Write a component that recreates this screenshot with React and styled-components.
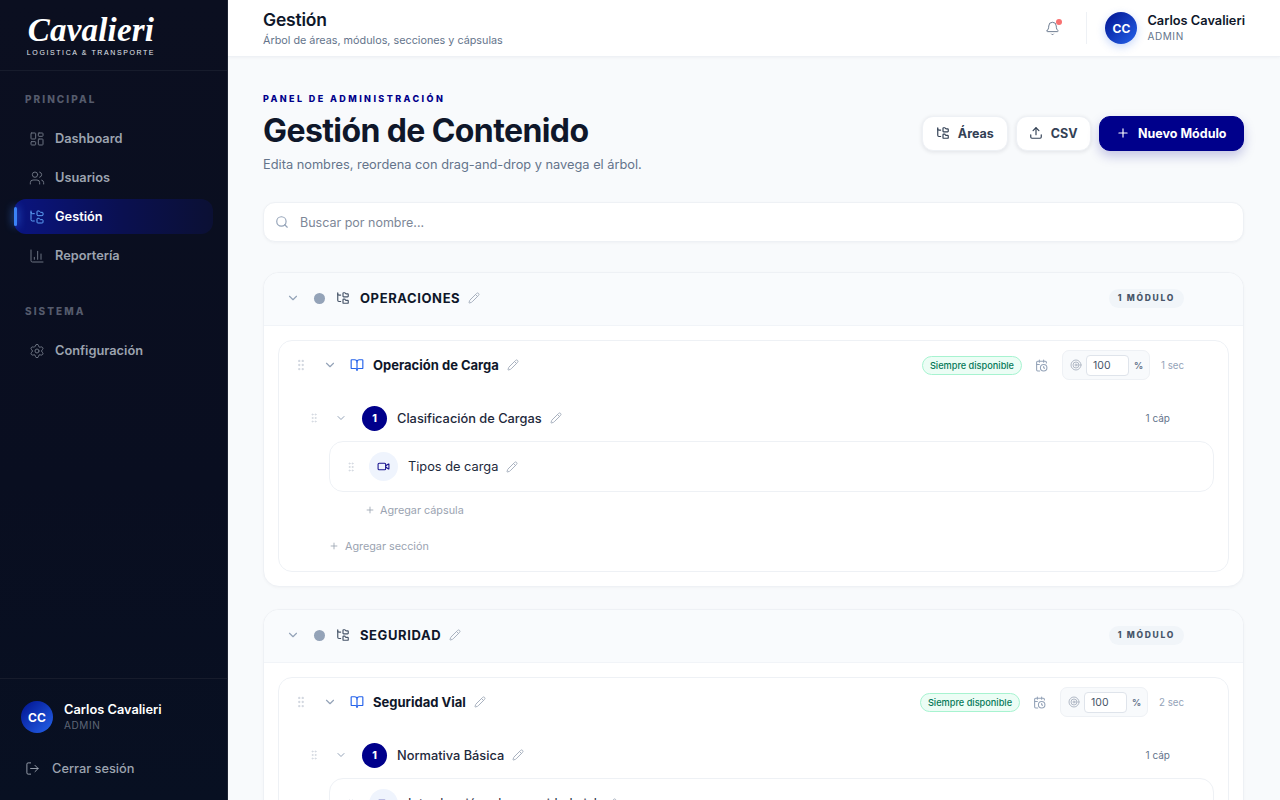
import React from 'react';
import styled, { createGlobalStyle } from 'styled-components';
import {
  LayoutDashboard, Users, FolderTree, ChartColumn, Settings, LogOut, Bell, Upload, Plus,
  Search, ChevronDown, Pencil, BookOpen, GripVertical, Video, CalendarClock, Target,
} from 'lucide-react';

const GlobalStyle = createGlobalStyle`
  * { box-sizing: border-box; }
  html, body { margin: 0; height: 100%; overflow: hidden; }
  body { font-family: Inter, "Noto Sans", sans-serif; color: #0f172a; background: #f8fafc; }
`;

const Page = styled.div`
  display: flex;
  width: 100%;
  height: 100vh;
  overflow: hidden;
`;

const Sidebar = styled.aside`
  width: 228px;
  flex: none;
  display: flex;
  flex-direction: column;
  background: linear-gradient(180deg, #0b0f20 0%, #090e20 60%, #081022 100%);
  border-right: 1px solid #1e2433;
`;

const LogoBlock = styled.div`
  height: 71px;
  flex: none;
  padding-top: 12px;
  display: flex;
  flex-direction: column;
  align-items: center;
  width: 100%;
  padding-right: 45px;
  border-bottom: 1px solid #171c2c;
`;

const LogoScript = styled.div`
  font-family: "Liberation Serif", serif;
  font-style: italic;
  font-weight: 700;
  font-size: 33px;
  line-height: 36px;
  color: #fff;
  letter-spacing: 0.2px;
`;

const LogoTag = styled.div`
  font-family: "Liberation Sans", sans-serif;
  font-size: 7px;
  line-height: 9px;
  letter-spacing: 1.6px;
  color: #e2e8f0;
  white-space: nowrap;
`;

const NavArea = styled.nav`
  flex: 1;
  padding: 22px 14px 0;
`;

const NavHeading = styled.div`
  font-size: 10px;
  line-height: 12px;
  font-weight: 800;
  letter-spacing: 2.05px;
  color: #555b6c;
  padding-left: 11px;
  margin-bottom: 16px;
  margin-top: ${(p) => (p.$spaced ? '32px' : '0')};
`;

const NavList = styled.div`
  display: flex;
  flex-direction: column;
  gap: 4px;
`;

const NavItem = styled.a`
  position: relative;
  height: 35px;
  display: flex;
  align-items: center;
  gap: 10px;
  padding-left: 15px;
  border-radius: 12px;
  font-size: 12.8px;
  font-weight: 600;
  color: ${(p) => (p.$active ? '#ffffff' : '#9ca3af')};
  background: ${(p) => (p.$active ? 'linear-gradient(90deg, #0a1480 0%, #0a1050 55%, #0b1034 100%)' : 'transparent')};
  svg { color: ${(p) => (p.$active ? '#60a5fa' : '#6b7280')}; flex: none; }
  &::before {
    content: '';
    display: ${(p) => (p.$active ? 'block' : 'none')};
    position: absolute;
    left: 0;
    top: 8px;
    width: 3px;
    height: 19px;
    border-radius: 2px;
    background: #3b82f6;
    box-shadow: 0 0 8px #3b82f6;
  }
`;

const SideFooter = styled.div`
  height: 122px;
  flex: none;
  border-top: 1px solid #171c2c;
  padding: 22px 21px 0;
`;

const UserRow = styled.div`
  display: flex;
  align-items: center;
  gap: ${(p) => (p.$header ? '10px' : '11px')};
`;

const Avatar = styled.div`
  width: 32px;
  height: 32px;
  border-radius: 50%;
  flex: none;
  display: flex;
  align-items: center;
  justify-content: center;
  font-size: 12px;
  font-weight: 700;
  color: #fff;
  background: linear-gradient(135deg, #00128f 0%, #2563eb 100%);
  box-shadow: ${(p) => (p.$shadow ? '0 3px 8px rgba(37, 99, 235, 0.25)' : 'none')};
`;

const UserName = styled.div`
  font-size: 12.8px;
  line-height: 16px;
  font-weight: 600;
  white-space: nowrap;
  color: ${(p) => (p.$light ? '#ffffff' : '#0f172a')};
`;

const UserRole = styled.div`
  font-size: 10px;
  line-height: 14px;
  letter-spacing: 0.6px;
  color: ${(p) => (p.$light ? '#5f6676' : '#64748b')};
`;

const Logout = styled.a`
  display: flex;
  align-items: center;
  gap: 12px;
  margin-top: 28px;
  padding-left: 4px;
  font-size: 12.8px;
  font-weight: 500;
  color: #9ca3af;
`;

const Main = styled.div`
  flex: 1;
  min-width: 0;
  display: flex;
  flex-direction: column;
`;

const TopBar = styled.header`
  height: 57px;
  flex: none;
  display: flex;
  align-items: center;
  justify-content: space-between;
  padding: 0 35px;
  background: #fff;
  border-bottom: 1px solid #eef1f5;
  box-shadow: 0 1px 3px rgba(15, 23, 42, 0.04);
`;

const TopTitle = styled.div`
  font-size: 17.5px;
  line-height: 22px;
  font-weight: 600;
  letter-spacing: -0.2px;
`;

const TopSub = styled.div`
  font-size: 10.8px;
  line-height: 15px;
  margin-top: 2px;
  color: #64748b;
`;

const TopRight = styled.div`
  display: flex;
  align-items: center;
`;

const BellWrap = styled.div`
  position: relative;
  display: flex;
  color: #64748b;
  margin-right: 26px;
  &::after {
    content: '';
    position: absolute;
    top: -2px;
    right: -2px;
    width: 6px;
    height: 6px;
    border-radius: 50%;
    background: #f87171;
  }
`;

const VDivider = styled.div`
  width: 1px;
  height: 32px;
  background: #eef1f5;
  margin-right: 18px;
`;

const Content = styled.main`
  flex: 1;
  min-height: 0;
  overflow: hidden;
  padding: 36px 36px 0 35px;
`;

const PageHead = styled.div`
  display: flex;
  justify-content: space-between;
  align-items: center;
  height: 80px;
`;

const HeadText = styled.div`
  align-self: flex-start;
`;

const Eyebrow = styled.div`
  font-size: 9px;
  line-height: 12px;
  font-weight: 800;
  letter-spacing: 2.4px;
  color: #00008b;
`;

const PageTitle = styled.h1`
  margin: 7px 0 0;
  font-size: 32px;
  line-height: 38px;
  font-weight: 700;
  letter-spacing: -0.6px;
  color: #0f172a;
`;

const PageSub = styled.p`
  margin: 6px 0 0;
  font-size: 12.8px;
  line-height: 18px;
  color: #64748b;
`;

const Actions = styled.div`
  display: flex;
  gap: 8px;
`;

const ActionButton = styled.button`
  height: 35px;
  padding: 0 ${(p) => p.$pad}px;
  display: flex;
  align-items: center;
  gap: 8px;
  border-radius: 11px;
  font-family: inherit;
  font-size: 12.5px;
  font-weight: 700;
  color: ${(p) => (p.$primary ? '#ffffff' : '#334155')};
  background: ${(p) => (p.$primary ? '#00008b' : '#ffffff')};
  border: 1px solid ${(p) => (p.$primary ? '#00008b' : '#eef1f5')};
  box-shadow: ${(p) => (p.$primary ? '0 5px 12px rgba(0, 0, 139, 0.22)' : '0 1px 4px rgba(15, 23, 42, 0.1)')};
`;

const SearchBar = styled.div`
  margin-top: 29px;
  height: 40px;
  display: flex;
  align-items: center;
  gap: 11px;
  padding-left: 11px;
  background: #fff;
  border: 1px solid #eef1f5;
  border-radius: 12px;
  box-shadow: 0 1px 3px rgba(15, 23, 42, 0.04);
  color: #94a3b8;
`;

const SearchText = styled.span`
  font-size: 12.5px;
  color: #7d8797;
`;

const AreaList = styled.div`
  margin-top: 30px;
  display: flex;
  flex-direction: column;
  gap: 22px;
`;

const AreaCard = styled.section`
  background: #fff;
  border: 1px solid #eef1f5;
  border-radius: 16px;
  box-shadow: 0 1px 3px rgba(15, 23, 42, 0.03);
  overflow: hidden;
  flex: none;
`;

const AreaHeader = styled.div`
  height: 53px;
  display: flex;
  align-items: center;
  padding: 0 59px 2px 22px;
  background: #f9fbfd;
  border-bottom: 1px solid #f1f4f8;
  color: #94a3b8;
`;

const AreaDot = styled.span`
  width: 11px;
  height: 11px;
  border-radius: 50%;
  background: #94a3b8;
  margin: 0 11px 0 14px;
`;

const AreaTitle = styled.span`
  margin-left: 10px;
  font-size: 13px;
  font-weight: 700;
  letter-spacing: 0.6px;
  color: #0f172a;
`;

const EditPencil = styled(Pencil)`
  color: #a8b1bf;
  margin-left: 8px;
  flex: none;
`;

const CountPill = styled.span`
  margin-left: auto;
  height: 19px;
  padding: 0 9px;
  display: flex;
  align-items: center;
  border-radius: 10px;
  background: #f1f5f9;
  font-size: 8.5px;
  font-weight: 800;
  letter-spacing: 1.7px;
  color: #475569;
  white-space: nowrap;
`;

const AreaBody = styled.div`
  padding: 14px;
`;

const ModuleCard = styled.div`
  border: 1px solid #eef1f5;
  border-radius: 14px;
  padding-bottom: 17px;
`;

const ModuleRow = styled.div`
  height: 48px;
  display: flex;
  align-items: center;
  padding: 0 44px 0 15px;
`;

const Grip = styled(GripVertical)`
  color: #d3d8e0;
  flex: none;
`;

const Caret = styled(ChevronDown)`
  color: #94a3b8;
  flex: none;
  margin-left: ${(p) => p.$gap}px;
`;

const ModuleIcon = styled(BookOpen)`
  color: #2563eb;
  flex: none;
  margin-left: 13px;
`;

const ModuleTitle = styled.span`
  margin-left: 9px;
  font-size: 13px;
  font-weight: 700;
  color: #0f172a;
`;

const RightGroup = styled.div`
  margin-left: auto;
  display: flex;
  align-items: center;
`;

const Availability = styled.span`
  height: 19px;
  padding: 0 7px;
  display: flex;
  align-items: center;
  border-radius: 10px;
  background: #ecfdf5;
  border: 1px solid #a7f3d0;
  font-size: 9.2px;
  font-weight: 500;
  color: #047857;
  white-space: nowrap;
`;

const ScheduleIcon = styled(CalendarClock)`
  color: #94a3b8;
  margin: 0 14px 0 13px;
  flex: none;
`;

const PercentBox = styled.div`
  width: 88px;
  height: 30px;
  display: flex;
  align-items: center;
  padding: 0 6px 0 7px;
  background: #f8fafc;
  border: 1px solid #eef1f5;
  border-radius: 7px;
  color: #b0b8c5;
`;

const PercentInput = styled.div`
  width: 43px;
  height: 21px;
  margin-left: 4px;
  padding-left: 6px;
  display: flex;
  align-items: center;
  background: #fff;
  border: 1px solid #dfe4eb;
  border-radius: 4px;
  font-size: 10.5px;
  color: #475569;
`;

const PercentSign = styled.span`
  margin-left: auto;
  font-size: 9px;
  font-weight: 700;
  color: #64748b;
`;

const CountText = styled.span`
  margin-left: ${(p) => p.$gap || 0}px;
  font-size: 9.7px;
  color: #94a3b8;
  white-space: nowrap;
`;

const SectionRow = styled.div`
  height: 40px;
  margin-top: 9px;
  display: flex;
  align-items: center;
  padding: 0 58px 0 29px;
`;

const StepBadge = styled.span`
  width: 25px;
  height: 25px;
  margin-left: 15px;
  border-radius: 50%;
  flex: none;
  display: flex;
  align-items: center;
  justify-content: center;
  background: #00008b;
  color: #fff;
  font-size: 10.5px;
  font-weight: 800;
`;

const SectionTitle = styled.span`
  margin-left: 10px;
  font-size: 12.8px;
  font-weight: 500;
  color: #1e293b;
`;

const SectionCount = styled.span`
  margin-left: auto;
  font-size: 10px;
  color: #64748b;
`;

const CapsuleCard = styled.div`
  height: 51px;
  margin: 3px 14px 0 50px;
  display: flex;
  align-items: center;
  padding-left: 15px;
  border: 1px solid #eef1f5;
  border-radius: 14px;
`;

const CapsuleIcon = styled.span`
  width: 29px;
  height: 29px;
  margin-left: 12px;
  border-radius: 50%;
  flex: none;
  display: flex;
  align-items: center;
  justify-content: center;
  background: #eff4fd;
  color: #1a148f;
`;

const CapsuleTitle = styled.span`
  margin-left: 10px;
  font-size: 12.8px;
  color: #1e293b;
`;

const AddLink = styled.a`
  display: flex;
  align-items: center;
  gap: ${(p) => p.$gap}px;
  height: 16px;
  font-size: 10.8px;
  color: #9aa3b1;
  margin-top: ${(p) => p.$top}px;
  margin-left: ${(p) => p.$left}px;
`;

const mainNav = [
  { label: 'Dashboard', icon: LayoutDashboard },
  { label: 'Usuarios', icon: Users },
  { label: 'Gestión', icon: FolderTree, active: true },
  { label: 'Reportería', icon: ChartColumn },
];

const areas = [
  {
    name: 'OPERACIONES',
    module: 'Operación de Carga',
    secs: '1 sec',
    section: 'Clasificación de Cargas',
    capsule: 'Tipos de carga',
  },
  {
    name: 'SEGURIDAD',
    module: 'Seguridad Vial',
    secs: '2 sec',
    section: 'Normativa Básica',
    capsule: 'Introducción a la seguridad vial',
  },
];

function Area({ area }) {
  return (
    <AreaCard>
      <AreaHeader>
        <ChevronDown size={14} />
        <AreaDot />
        <FolderTree size={14} color="#475569" />
        <AreaTitle>{area.name}</AreaTitle>
        <EditPencil size={12} />
        <CountPill>1 MÓDULO</CountPill>
      </AreaHeader>
      <AreaBody>
        <ModuleCard>
          <ModuleRow>
            <Grip size={14} />
            <Caret size={14} $gap={15} />
            <ModuleIcon size={14} />
            <ModuleTitle>{area.module}</ModuleTitle>
            <EditPencil size={12} />
            <RightGroup>
              <Availability>Siempre disponible</Availability>
              <ScheduleIcon size={13} />
              <PercentBox>
                <Target size={12} />
                <PercentInput>100</PercentInput>
                <PercentSign>%</PercentSign>
              </PercentBox>
              <CountText $gap={11}>{area.secs}</CountText>
            </RightGroup>
          </ModuleRow>
          <SectionRow>
            <Grip size={12} />
            <Caret size={12} $gap={15} />
            <StepBadge>1</StepBadge>
            <SectionTitle>{area.section}</SectionTitle>
            <EditPencil size={12} />
            <SectionCount>1 cáp</SectionCount>
          </SectionRow>
          <CapsuleCard>
            <Grip size={12} />
            <CapsuleIcon><Video size={13} /></CapsuleIcon>
            <CapsuleTitle>{area.capsule}</CapsuleTitle>
            <EditPencil size={12} />
          </CapsuleCard>
          <AddLink $top={10} $left={86} $gap={5}><Plus size={10} />Agregar cápsula</AddLink>
          <AddLink $top={20} $left={50} $gap={6}><Plus size={10} />Agregar sección</AddLink>
        </ModuleCard>
      </AreaBody>
    </AreaCard>
  );
}

export default function App() {
  return (
    <Page>
      <GlobalStyle />
      <Sidebar>
        <LogoBlock>
          <LogoScript>Cavalieri</LogoScript>
          <LogoTag>LOGISTICA &amp; TRANSPORTE</LogoTag>
        </LogoBlock>
        <NavArea>
          <NavHeading>PRINCIPAL</NavHeading>
          <NavList>
            {mainNav.map(({ label, icon: Icon, active }) => (
              <NavItem key={label} $active={active}>
                <Icon size={16} strokeWidth={1.5} />
                {label}
              </NavItem>
            ))}
          </NavList>
          <NavHeading $spaced>SISTEMA</NavHeading>
          <NavItem>
            <Settings size={16} strokeWidth={1.5} />
            Configuración
          </NavItem>
        </NavArea>
        <SideFooter>
          <UserRow>
            <Avatar>CC</Avatar>
            <div>
              <UserName $light>Carlos Cavalieri</UserName>
              <UserRole $light>ADMIN</UserRole>
            </div>
          </UserRow>
          <Logout>
            <LogOut size={15} strokeWidth={1.5} />
            Cerrar sesión
          </Logout>
        </SideFooter>
      </Sidebar>
      <Main>
        <TopBar>
          <div>
            <TopTitle>Gestión</TopTitle>
            <TopSub>Árbol de áreas, módulos, secciones y cápsulas</TopSub>
          </div>
          <TopRight>
            <BellWrap><Bell size={15} strokeWidth={1.5} /></BellWrap>
            <VDivider />
            <UserRow $header>
              <Avatar $shadow>CC</Avatar>
              <div>
                <UserName>Carlos Cavalieri</UserName>
                <UserRole>ADMIN</UserRole>
              </div>
            </UserRow>
          </TopRight>
        </TopBar>
        <Content>
          <PageHead>
            <HeadText>
              <Eyebrow>PANEL DE ADMINISTRACIÓN</Eyebrow>
              <PageTitle>Gestión de Contenido</PageTitle>
              <PageSub>Edita nombres, reordena con drag-and-drop y navega el árbol.</PageSub>
            </HeadText>
            <Actions>
              <ActionButton $pad={13}><FolderTree size={14} />Áreas</ActionButton>
              <ActionButton $pad={12}><Upload size={14} />CSV</ActionButton>
              <ActionButton $primary $pad={16.5}><Plus size={14} />Nuevo Módulo</ActionButton>
            </Actions>
          </PageHead>
          <SearchBar>
            <Search size={14} />
            <SearchText>Buscar por nombre...</SearchText>
          </SearchBar>
          <AreaList>
            {areas.map((area) => <Area key={area.name} area={area} />)}
          </AreaList>
        </Content>
      </Main>
    </Page>
  );
}
